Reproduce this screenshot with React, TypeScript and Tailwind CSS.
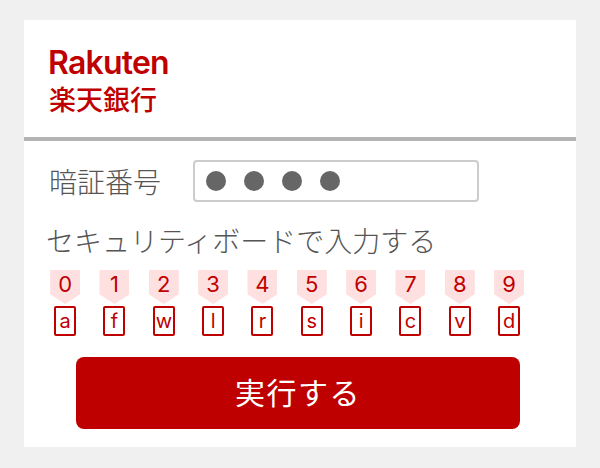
const digits = ["0", "1", "2", "3", "4", "5", "6", "7", "8", "9"];
const keys = ["a", "f", "w", "l", "r", "s", "i", "c", "v", "d"];

export default function App() {
    return (
        <div
            className="h-[468px] w-[600px] overflow-hidden bg-[#f0f0f0] px-6 pt-5"
            style={{ fontFamily: '"Noto Sans CJK JP", "Noto Sans", sans-serif' }}
        >
            <div className="flex h-[427px] w-[552px] flex-col bg-white">
                {/* HEADER */}
                <div className="flex h-[121px] flex-col border-b-[4px] border-[#b3b3b3] pl-[24px] pt-[25px] text-[#bf0000]">
                    <div className="h-[36px] text-[32px] font-semibold leading-[36px] tracking-[-0.8px]" style={{ fontFamily: "Inter, sans-serif" }}>
                        Rakuten
                    </div>
                    <div className="mt-[1px] pl-[1px] text-[27px] font-medium leading-[34px]">楽天銀行</div>
                </div>

                {/* PIN */}
                <div className="mt-[19px] flex h-[42px] items-center pl-[25px]">
                    <span className="w-[144px] text-[28px] font-light leading-[42px] text-[#555555]">暗証番号</span>
                    <div className="flex h-[42px] w-[286px] items-center gap-[18.5px] rounded-[4px] border-2 border-[#cccccc] pl-[11px]">
                        <span className="h-[19.5px] w-[19.5px] rounded-full bg-[#666666]" />
                        <span className="h-[19.5px] w-[19.5px] rounded-full bg-[#666666]" />
                        <span className="h-[19.5px] w-[19.5px] rounded-full bg-[#666666]" />
                        <span className="h-[19.5px] w-[19.5px] rounded-full bg-[#666666]" />
                    </div>
                </div>

                <div className="mt-[18px] pl-[22px] text-[28px] font-light leading-[40px] text-[#555555]">
                    セキュリティボードで入力する
                </div>

                {/* BOARD */}
                <div className="mt-[10px] flex pl-[16.5px]" style={{ fontFamily: "Inter, sans-serif" }}>
                    {digits.map((d, i) => (
                        <div key={d} className="flex w-[49.33px] flex-col items-center">
                            <div className="flex h-[34px] w-[30px] justify-center bg-[#ffe0e0] text-[22px] leading-[29px] text-[#bf0000] [clip-path:polygon(0_0,100%_0,100%_71%,50%_100%,0_71%)]">
                                {d}
                            </div>
                            <div className="mt-[2px] flex h-[30px] w-[22px] items-center justify-center rounded-[2px] border-2 border-[#bf0000] text-[20px] leading-none text-[#bf0000]">
                                {keys[i]}
                            </div>
                        </div>
                    ))}
                </div>

                {/* SUBMIT */}
                <div className="mt-[21px] flex pl-[52px]">
                    <button
                        type="button"
                        className="h-[72px] w-[444px] rounded-[8px] bg-[#bf0000] pb-[4px] text-[30px] tracking-[1.5px] text-white"
                    >
                        実行する
                    </button>
                </div>
            </div>
        </div>
    );
}
